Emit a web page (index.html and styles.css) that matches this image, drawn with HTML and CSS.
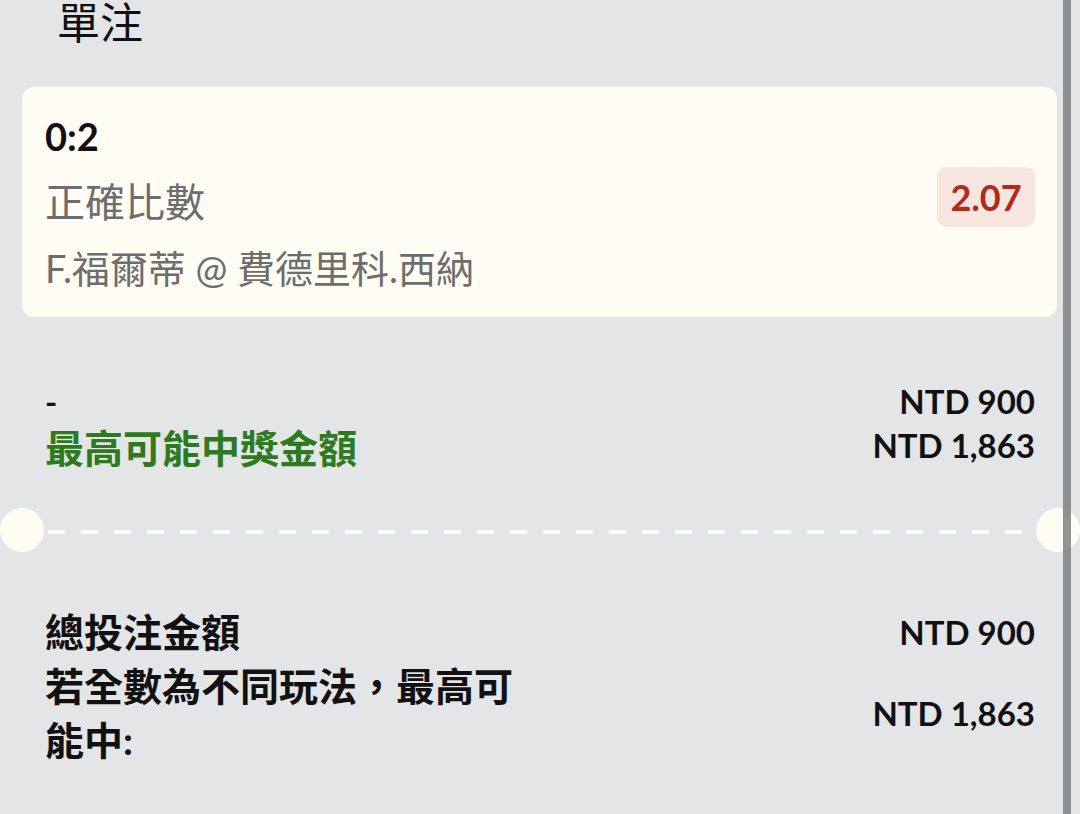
FILE: index.html
```html
<!DOCTYPE html>
<html lang="zh-Hant">
<head>
<meta charset="utf-8">
<link rel="stylesheet" href="styles.css">
</head>
<body>
<div class="page">
  <h1 class="title">單注</h1>

  <div class="card">
    <div class="card-info">
      <div class="score">0:2</div>
      <div class="market">正確比數</div>
      <div class="match">F.福爾蒂 @ 費德里科.西納</div>
    </div>
    <div class="odds">2.07</div>
  </div>

  <div class="summary">
    <div class="summary-left">
      <div class="dash-label">-</div>
      <div class="win-label">最高可能中獎金額</div>
    </div>
    <div class="summary-right">
      <div class="amount">NTD 900</div>
      <div class="amount">NTD 1,863</div>
    </div>
  </div>

  <div class="divider">
    <span class="notch"></span>
    <span class="dashes"></span>
    <span class="notch"></span>
  </div>

  <div class="totals">
    <div class="total-label">總投注金額</div>
    <div class="total-amount">NTD 900</div>
    <div class="total-label">若全數為不同玩法，最高可能中:</div>
    <div class="total-amount">NTD 1,863</div>
  </div>

  <div class="scrollbar"></div>
</div>
</body>
</html>
```

FILE: styles.css
```css
* { box-sizing: border-box; }

html, body {
  margin: 0;
  padding: 0;
  background: #e4e5e7;
}

body {
  font-family: Lato, "Noto Sans CJK TC", "Noto Sans", sans-serif;
  color: #111;
}

.page {
  position: relative;
  width: 1080px;
  height: 814px;
  overflow: hidden;
}

.title {
  margin: 0;
  padding-left: 57px;
  font-size: 43px;
  font-weight: 400;
  line-height: 46px;
  height: 46px;
  color: #111;
}

.card {
  margin: 41px 23px 0 22px;
  height: 230px;
  background: #fefcf3;
  border-radius: 12px;
  display: flex;
  align-items: center;
  justify-content: space-between;
  padding: 0 22px 0 23px;
}

.card-info {
  display: flex;
  flex-direction: column;
}

.score {
  font-size: 38px;
  font-weight: 700;
  line-height: 66px;
  color: #111;
}

.market {
  font-size: 40px;
  line-height: 66px;
  color: #6d6d6d;
}

.match {
  font-size: 38px;
  line-height: 66px;
  color: #6d6d6d;
}

.odds {
  width: 98px;
  height: 60px;
  margin-top: -10px;
  border-radius: 9px;
  background: #f6e6df;
  color: #b5281e;
  font-size: 36px;
  font-weight: 700;
  display: flex;
  align-items: center;
  justify-content: center;
}

.summary {
  display: flex;
  justify-content: space-between;
  padding: 62px 45px 0 45px;
  height: 191px;
}

.summary-left {
  display: flex;
  flex-direction: column;
}

.dash-label {
  font-size: 33px;
  font-weight: 700;
  line-height: 44px;
}

.win-label {
  font-size: 39px;
  font-weight: 700;
  line-height: 50px;
  color: #2e7a21;
}

.summary-right {
  display: flex;
  flex-direction: column;
  align-items: flex-end;
}

.amount {
  font-size: 33px;
  font-weight: 700;
  line-height: 44px;
}

.divider {
  display: flex;
  align-items: center;
  height: 44px;
}

.notch {
  flex: none;
  width: 44px;
  height: 44px;
  border-radius: 50%;
  background: #fefcf3;
}

.dashes {
  flex: 1;
  height: 4px;
  margin: 3px 0 0 4px;
  background: repeating-linear-gradient(90deg, #fefcf3 0 17px, transparent 17px 33px);
}

.totals {
  display: grid;
  grid-template-columns: 480px 1fr;
  align-items: center;
  padding: 53px 45px 0 45px;
}

.total-label {
  font-size: 39px;
  font-weight: 700;
  line-height: 54px;
}

.total-amount {
  font-size: 33px;
  font-weight: 700;
  line-height: 44px;
  text-align: right;
}

.scrollbar {
  position: absolute;
  top: 0;
  bottom: 0;
  left: 1063px;
  width: 8px;
  background: rgba(128, 128, 128, 0.85);
}
```
